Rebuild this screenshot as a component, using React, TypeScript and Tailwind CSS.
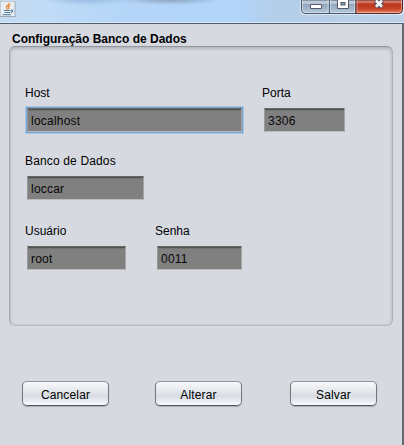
import type { ReactNode } from "react";

function JavaIcon() {
  return (
    <svg className="mt-px h-[16px] w-[16px] shrink-0" viewBox="0 0 16 16" fill="none">
      <rect x="0" y="0" width="15" height="15.5" fill="#e9eef2" stroke="#9aaab9" />
      <path d="M9 2C10 4 5.5 4.5 6.5 7L7.5 8.5M10.5 4C8 5 8 6 9 8" stroke="#e8842c" strokeWidth="1.3" />
      <path d="M4 9.5h6.5M4.5 11.5h5.5M2.5 13.7h8.5M11 9.2c2.4-.5 2 2-.3 2.4" stroke="#4e7896" strokeWidth="1.1" />
    </svg>
  );
}

function WindowControls() {
  return (
    <svg className="h-[15px] w-[104px]" viewBox="0 0 104 15" fill="none">
      <defs>
        <linearGradient id="glass" x1="0" y1="0" x2="0" y2="1">
          <stop offset="0" stopColor="#c3cfdd" />
          <stop offset=".3" stopColor="#b4c3d4" />
          <stop offset=".31" stopColor="#91a5bc" />
          <stop offset="1" stopColor="#b5cadf" />
        </linearGradient>
        <linearGradient id="close" x1="0" y1="0" x2="0" y2="1">
          <stop offset="0" stopColor="#dc8c7c" />
          <stop offset=".2" stopColor="#cf6a55" />
          <stop offset=".3" stopColor="#bb3520" />
          <stop offset=".65" stopColor="#c84227" />
          <stop offset="1" stopColor="#e58a62" />
        </linearGradient>
      </defs>
      <path d="M.5 0V10Q.5 14.5 4.5 14.5H99Q103.5 14.5 103.5 10V0" fill="#dfe9f3" stroke="#dce8f4" />
      <path d="M1.5 0V9.5Q1.5 13.5 5 13.5H56V0Z" fill="url(#glass)" stroke="#4c5867" />
      <path d="M56 0V13.5H98.5Q102.5 13.5 102.5 9.5V0Z" fill="url(#close)" stroke="#55252a" />
      <path d="M2.5 0V9.5Q2.5 12.5 5 12.5H28V0M30.5 0V12.5H54.5V0M57 0V12.5H98Q101.5 12.5 101.5 9V0" stroke="#fff" strokeOpacity=".4" />
      <path d="M29.5 0V13" stroke="#526073" />
      <rect x="10.5" y="4.5" width="11" height="4" rx=".5" fill="#fff" stroke="#535666" />
      <path d="M37.5 0V8.5H48.5V0" fill="#fff" stroke="#535666" />
      <rect x="41" y="2.5" width="4" height="2.5" fill="#8ca4bd" stroke="#535666" />
      <path d="M76 0L82 7M82 0L76 7" stroke="#4a4c5b" strokeWidth="5" />
      <path d="M76 .5L82 6.7M82 .5L76 6.7" stroke="#f5f5f5" strokeWidth="2.8" />
    </svg>
  );
}

function Field({ label, value, className, spacing, focused }: { label: string; value: string; className: string; spacing?: string; focused?: boolean }) {
  return (
    <label className={`block ${className}`}>
      <span className={`block h-[16px] leading-[16px] whitespace-nowrap ${spacing ?? ""}`}>{label}</span>
      <input
        defaultValue={value}
        className={`mt-[7px] ml-[2px] block h-[24px] w-[calc(100%-2px)] border border-t-[#666865] border-r-[#a5a5a4] border-b-[#bcbcba] border-l-[#989998] bg-[#808080] bg-[linear-gradient(#50544f_0_1px,#737572_1px_2px,#808080_2px)] px-[3px] pt-[2px] text-[#080808] tracking-[0.22px] outline-none ${focused ? "shadow-[0_0_0_1px_#73a4d1,0_0_0_2px_#a8c7e5]" : ""}`}
      />
    </label>
  );
}

function Button({ children }: { children: ReactNode }) {
  return (
    <button className="h-[25px] w-[87px] rounded-[5px] border border-t-[#92959b] border-r-[#74777b] border-b-[#53575b] border-l-[#74777b] bg-[linear-gradient(#f8f9fb,#e6e9ed_35%,#d8dce3_60%,#eceff4_88%,#fafcff)] pt-[2px] leading-[16px] tracking-[0.15px] shadow-[0_1px_1px_#a6abb3]">
      {children}
    </button>
  );
}

export default function App() {
  return (
    <main className="flex h-[445px] w-[404px] flex-col overflow-hidden bg-[#d6d9e0] font-['Liberation_Sans',Arial,sans-serif] text-[12px] text-black">
      <header className="flex h-[24px] shrink-0 justify-between border-b border-[#515d6a] bg-[radial-gradient(ellipse_45px_6px_at_88px_0px,#8eb3dbbb,transparent),radial-gradient(ellipse_50px_5px_at_170px_0px,#8199b3cc,transparent),linear-gradient(90deg,#c6dbef,#bfdbf7_12%,#b4d5f8_32%,#b1d4f9_60%,#b4cee9_68%,#bdd1e7)] shadow-[inset_0_-1px_0_#d8e9fa]">
        <JavaIcon />
        <WindowControls />
      </header>
      <section className="flex-1 border-r-2 border-[#626b77] pt-[7px] pl-[9px]">
        <h1 className="h-[15px] pl-[3px] leading-[16px] font-bold tracking-[0px] whitespace-nowrap">Configuração Banco de Dados</h1>
        <div className="h-[280px] w-[384px] rounded-[6px] border border-t-[#929599] border-r-[#aeb1b6] border-b-[#b8bbc0] border-l-[#a5a8ad] pt-[38px] pl-[15px] shadow-[inset_0_2px_3px_#b4b7bd,inset_0_0_3px_#bfc2c8]">
          <div className="flex">
            <Field label="Host" value="localhost" className="w-[217px]" focused />
            <Field label="Porta" value="3306" className="ml-[20px] w-[83px]" />
          </div>
          <Field label="Banco de Dados" value="loccar" className="mt-[21px] w-[119px]" spacing="tracking-[0.15px]" />
          <div className="mt-[23px] flex">
            <Field label="Usuário" value="root" className="w-[101px]" />
            <Field label="Senha" value="0011" className="ml-[29px] w-[87px]" />
          </div>
        </div>
        <footer className="mt-[55px] flex pl-[13px]">
          <Button>Cancelar</Button>
          <div className="ml-[46px]"><Button>Alterar</Button></div>
          <div className="ml-[48px]"><Button>Salvar</Button></div>
        </footer>
      </section>
    </main>
  );
}
